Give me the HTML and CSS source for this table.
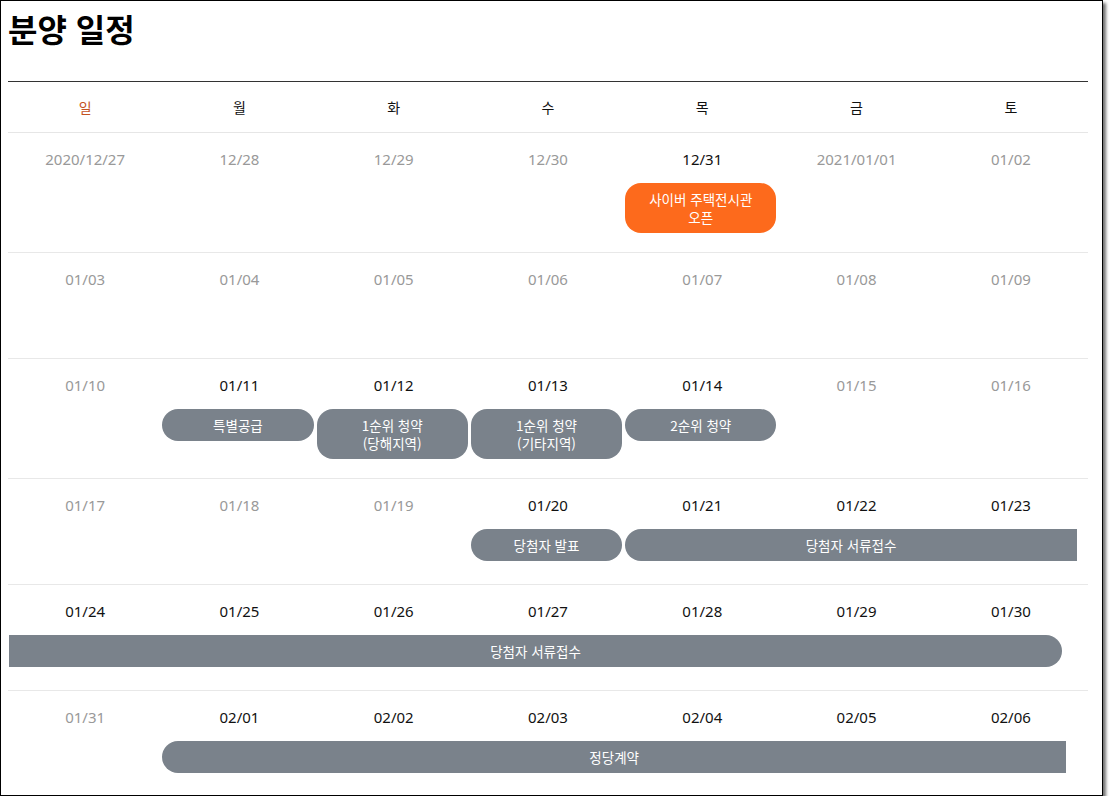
FILE: index.html
```html
<!DOCTYPE html>
<html lang="ko">
<head>
<meta charset="utf-8">
<title>분양 일정</title>
<link rel="stylesheet" href="styles.css">
</head>
<body>
<div class="frame">
  <div class="title-wrap"><h1 class="title">분양 일정</h1></div>
  <div class="days">
    <div class="day sun">일</div><div class="day">월</div><div class="day">화</div><div class="day">수</div><div class="day">목</div><div class="day">금</div><div class="day">토</div>
  </div>

  <div class="week">
    <div class="date">2020/12/27</div><div class="date">12/28</div><div class="date">12/29</div><div class="date">12/30</div><div class="date on">12/31</div><div class="date">2021/01/01</div><div class="date">01/02</div>
    <div class="ev orange c5">사이버 주택전시관<br>오픈</div>
  </div>

  <div class="week">
    <div class="date">01/03</div><div class="date">01/04</div><div class="date">01/05</div><div class="date">01/06</div><div class="date">01/07</div><div class="date">01/08</div><div class="date">01/09</div>
  </div>

  <div class="week">
    <div class="date">01/10</div><div class="date on">01/11</div><div class="date on">01/12</div><div class="date on">01/13</div><div class="date on">01/14</div><div class="date">01/15</div><div class="date">01/16</div>
    <div class="ev c2">특별공급</div>
    <div class="ev c3">1순위 청약<br>(당해지역)</div>
    <div class="ev c4">1순위 청약<br>(기타지역)</div>
    <div class="ev c5">2순위 청약</div>
  </div>

  <div class="week">
    <div class="date">01/17</div><div class="date">01/18</div><div class="date">01/19</div><div class="date on">01/20</div><div class="date on">01/21</div><div class="date on">01/22</div><div class="date on">01/23</div>
    <div class="ev c4">당첨자 발표</div>
    <div class="ev c5-7 open-right r11">당첨자 서류접수</div>
  </div>

  <div class="week">
    <div class="date on">01/24</div><div class="date on">01/25</div><div class="date on">01/26</div><div class="date on">01/27</div><div class="date on">01/28</div><div class="date on">01/29</div><div class="date on">01/30</div>
    <div class="ev c1-7 open-left r26">당첨자 서류접수</div>
  </div>

  <div class="week">
    <div class="date">01/31</div><div class="date on">02/01</div><div class="date on">02/02</div><div class="date on">02/03</div><div class="date on">02/04</div><div class="date on">02/05</div><div class="date on">02/06</div>
    <div class="ev c2-7 open-right r22">정당계약</div>
  </div>
</div>
</body>
</html>
```

FILE: styles.css
```css
html, body {
  margin: 0;
  padding: 0;
  background: #fff;
}

body {
  font-family: "Noto Sans", "Noto Sans CJK KR", sans-serif;
  color: #111;
}

.frame {
  box-sizing: border-box;
  width: 1103px;
  height: 796px;
  overflow: hidden;
  border: 1px solid #000;
  box-shadow: 3px 3px 3px rgba(0, 0, 0, 0.55);
  padding: 0 14px 0 7px;
  background: #fff;
}

.title-wrap {
  box-sizing: border-box;
  height: 81px;
  padding-top: 7px;
  border-bottom: 1px solid #333;
}

.title {
  margin: 0;
  font-family: "Noto Sans CJK KR", sans-serif;
  font-size: 32px;
  font-weight: 700;
  line-height: 40px;
  color: #000;
}

.days {
  display: grid;
  grid-template-columns: repeat(7, 1fr);
  height: 51px;
  box-sizing: border-box;
  border-bottom: 1px solid #e6e6e6;
  align-items: center;
}

.day {
  text-align: center;
  font-family: "Noto Sans CJK KR", sans-serif;
  font-size: 14px;
  color: #111;
}

.day.sun {
  color: #c4521f;
}

.week {
  display: grid;
  grid-template-columns: repeat(7, 1fr);
  grid-template-rows: 22px auto;
  row-gap: 13px;
  align-items: start;
  box-sizing: border-box;
  min-height: 106px;
  padding: 15px 0 19px;
  border-bottom: 1px solid #e8e8e8;
}

.date {
  grid-row: 1;
  text-align: center;
  font-size: 15px;
  line-height: 22px;
  color: #999;
}

.date.on {
  color: #111;
}

.ev {
  grid-row: 2;
  margin-right: 3px;
  padding: 7px 6px;
  border-radius: 16px;
  background: #7a828b;
  color: #fff;
  text-align: center;
  font-family: "Noto Sans CJK KR", sans-serif;
  font-size: 13.5px;
  line-height: 18px;
}

.ev.orange {
  background: #fd6a1c;
}

.c1 { grid-column: 1; }
.c2 { grid-column: 2; }
.c3 { grid-column: 3; }
.c4 { grid-column: 4; }
.c5 { grid-column: 5; }
.c5-7 { grid-column: 5 / 8; }
.c1-7 { grid-column: 1 / 8; }
.c2-7 { grid-column: 2 / 8; }

.open-right {
  border-top-right-radius: 0;
  border-bottom-right-radius: 0;
}

.open-left {
  border-top-left-radius: 0;
  border-bottom-left-radius: 0;
  margin-left: 1px;
}

.r11 { margin-right: 11px; }
.r22 { margin-right: 22px; }
.r26 { margin-right: 26px; }
```
